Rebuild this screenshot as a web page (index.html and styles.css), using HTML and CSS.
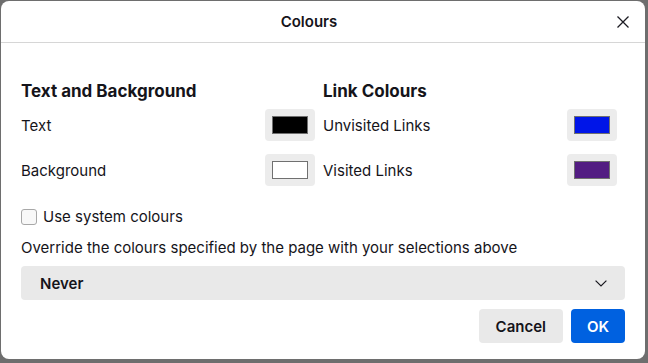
FILE: index.html
```html
<!DOCTYPE html>
<html lang="en">
<head>
  <meta charset="UTF-8" />
  <title>Colours</title>
  <link rel="stylesheet" href="styles.css">
</head>
<body>

  <!-- Dialog -->
  <div class="dialog">
    <header class="dialog-header">
      <h1 class="dialog-title">Colours</h1>
      <button class="close-btn" aria-label="Close">
        <svg width="12" height="12" viewBox="0 0 12 12">
          <path d="M0.5 0.5 L11.5 11.5 M11.5 0.5 L0.5 11.5" stroke="#1c1b22" stroke-width="1.3" fill="none"/>
        </svg>
      </button>
    </header>

    <main class="dialog-body">
      <div class="columns">
        <!-- Text and Background -->
        <section class="group">
          <h2 class="group-title">Text and Background</h2>
          <div class="colour-row">
            <span>Text</span>
            <button class="swatch-btn"><span class="swatch swatch-black"></span></button>
          </div>
          <div class="colour-row">
            <span>Background</span>
            <button class="swatch-btn"><span class="swatch swatch-white"></span></button>
          </div>
        </section>

        <!-- Link Colours -->
        <section class="group">
          <h2 class="group-title">Link Colours</h2>
          <div class="colour-row">
            <span>Unvisited Links</span>
            <button class="swatch-btn"><span class="swatch swatch-blue"></span></button>
          </div>
          <div class="colour-row">
            <span>Visited Links</span>
            <button class="swatch-btn"><span class="swatch swatch-purple"></span></button>
          </div>
        </section>
      </div>

      <label class="check-row">
        <span class="checkbox"></span>
        Use system colours
      </label>

      <p class="override-label">Override the colours specified by the page with your selections above</p>

      <div class="select">
        <span>Never</span>
        <svg width="12" height="7" viewBox="0 0 12 7">
          <path d="M0.6 0.6 L6 6 L11.4 0.6" stroke="#1c1b22" stroke-width="1.2" fill="none"/>
        </svg>
      </div>

      <div class="actions">
        <button class="btn">Cancel</button>
        <button class="btn btn-primary">OK</button>
      </div>
    </main>
  </div>

</body>
</html>
```

FILE: styles.css
```css
body {
  margin: 0;
  background-color: #6e6e6e;
  font-family: Inter, "Noto Sans", sans-serif;
  color: #15141a;
  font-size: 15px;
}

/* Dialog */
.dialog {
  margin: 1px 3px 0 1px;
  height: 358px;
  background-color: #fff;
  border-radius: 8px;
  overflow: hidden;
}

.dialog-header {
  display: flex;
  align-items: center;
  height: 41px;
  border-bottom: 1px solid #d6d6d6;
}

.dialog-title {
  flex: 1;
  margin: 0;
  padding-left: 8px;
  text-align: center;
  font-size: 15px;
  font-weight: 600;
}

.close-btn {
  width: 28px;
  height: 28px;
  margin-right: 8px;
  padding: 0;
  border: none;
  background: none;
  display: flex;
  align-items: center;
  justify-content: center;
}

/* Body */
.dialog-body {
  padding: 0 20px;
}

.columns {
  display: grid;
  grid-template-columns: 1fr 1fr;
}

.group-title {
  margin: 38px 0 8px;
  font-size: 17px;
  line-height: 20px;
  font-weight: 700;
}

.colour-row {
  display: flex;
  align-items: center;
  justify-content: space-between;
  height: 32px;
  margin-right: 8px;
  margin-bottom: 13px;
}

.swatch-btn {
  width: 50px;
  height: 32px;
  padding: 0;
  border: none;
  border-radius: 4px;
  background-color: #ececec;
  display: flex;
  align-items: center;
  justify-content: center;
}

.swatch {
  width: 34px;
  height: 16px;
  border: 1px solid #707070;
}

.swatch-black { background-color: #000; }
.swatch-white { background-color: #fff; }
.swatch-blue { background-color: #0015e8; }
.swatch-purple { background-color: #521c82; }

/* Checkbox */
.check-row {
  display: flex;
  align-items: center;
  gap: 6px;
  margin-top: 8px;
  line-height: 20px;
}

.checkbox {
  width: 14px;
  height: 14px;
  border: 1px solid #a8a8a8;
  border-radius: 3px;
  background-color: #f8f8f8;
}

.override-label {
  margin: 11px 0 8px;
  line-height: 20px;
}

/* Select */
.select {
  display: flex;
  align-items: center;
  justify-content: space-between;
  height: 34px;
  padding: 0 18px 0 19px;
  border-radius: 4px;
  background-color: #e9e9e9;
  font-weight: 600;
}

/* Buttons */
.actions {
  display: flex;
  justify-content: flex-end;
  gap: 8px;
  margin-top: 9px;
}

.btn {
  height: 34px;
  padding: 0 17px;
  border: none;
  border-radius: 4px;
  background-color: #e9e9e9;
  color: #15141a;
  font-family: inherit;
  font-size: 15px;
  font-weight: 600;
}

.btn-primary {
  width: 54px;
  padding: 0;
  background-color: #0061e0;
  color: #fff;
}
```
